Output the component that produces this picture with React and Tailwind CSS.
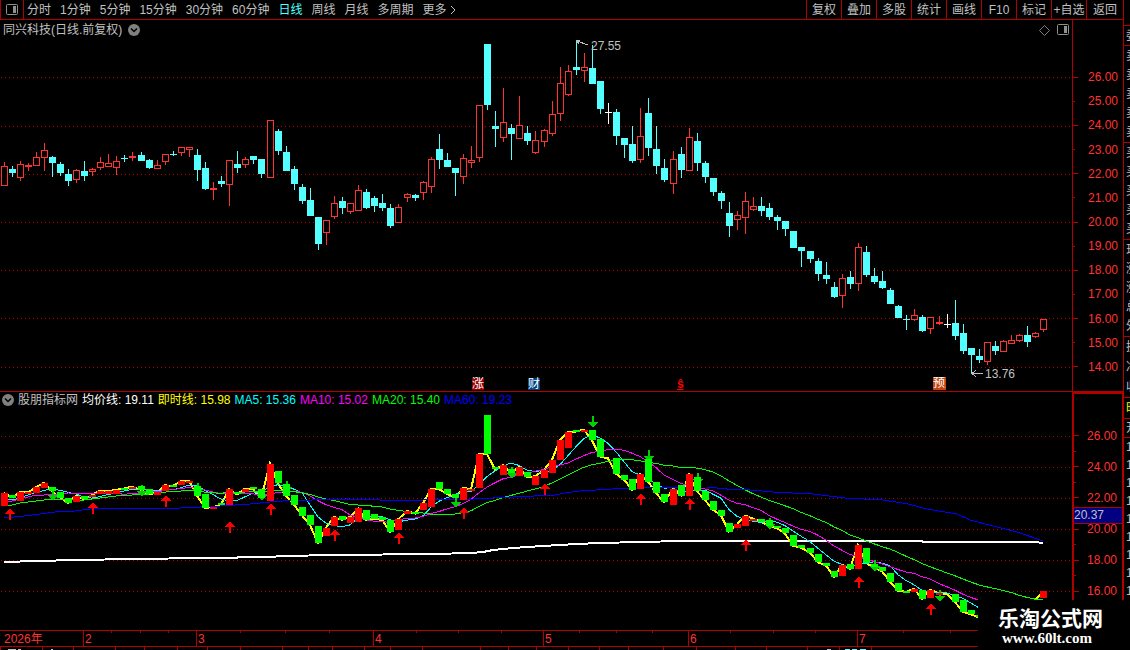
import React from 'react';

const periods = ['分时', '1分钟', '5分钟', '15分钟', '30分钟', '60分钟', '日线', '周线', '月线', '多周期'];
const tools = ['复权', '叠加', '多股', '统计', '画线', 'F10', '标记', '+自选', '返回'];

// high, body top, body bottom, low (chart rows), kind: r = up, c = down, w = flat
const candles = [
    [162, 166, 186, 186, 'r'], [166, 169, 173, 177, 'c'], [161, 164, 178, 181, 'r'], [163, 165, 167, 171, 'r'],
    [152, 157, 166, 166, 'r'], [143, 150, 158, 171, 'r'], [156, 157, 163, 177, 'c'], [162, 164, 173, 176, 'c'],
    [169, 174, 181, 186, 'c'], [169, 170, 180, 183, 'r'], [161, 171, 176, 181, 'c'], [168, 169, 172, 176, 'r'],
    [157, 162, 168, 170, 'r'], [154, 163, 167, 167, 'r'], [156, 161, 168, 175, 'r'], [155, 158, 159, 162, 'c'],
    [152, 156, 158, 161, 'r'], [152, 155, 161, 161, 'c'], [159, 160, 168, 169, 'c'], [160, 165, 169, 169, 'r'],
    [154, 154, 162, 165, 'r'], [151, 154, 155, 156, 'c'], [147, 147, 153, 156, 'r'], [147, 147, 150, 157, 'r'],
    [149, 155, 170, 181, 'c'], [162, 168, 189, 190, 'c'], [182, 188, 190, 200, 'r'], [176, 181, 184, 187, 'c'],
    [160, 160, 185, 206, 'r'], [151, 164, 168, 173, 'c'], [157, 159, 165, 168, 'r'], [156, 156, 160, 164, 'c'],
    [159, 159, 174, 178, 'c'], [120, 120, 178, 178, 'r'], [129, 131, 151, 155, 'c'], [146, 152, 171, 171, 'c'],
    [166, 169, 184, 190, 'c'], [184, 187, 201, 204, 'c'], [188, 200, 216, 216, 'c'], [217, 217, 244, 250, 'c'],
    [220, 220, 233, 245, 'r'], [196, 203, 217, 219, 'r'], [197, 201, 208, 214, 'c'], [203, 203, 212, 214, 'r'],
    [185, 190, 211, 211, 'r'], [189, 192, 208, 209, 'c'], [196, 198, 206, 212, 'c'], [194, 203, 208, 211, 'c'],
    [204, 208, 226, 228, 'c'], [204, 207, 223, 223, 'r'], [193, 194, 198, 202, 'r'], [194, 195, 198, 201, 'c'],
    [181, 182, 193, 200, 'r'], [157, 159, 187, 193, 'r'], [134, 149, 160, 169, 'c'], [153, 160, 167, 167, 'c'],
    [168, 168, 173, 196, 'c'], [154, 158, 177, 184, 'r'], [146, 160, 163, 168, 'r'], [105, 105, 158, 162, 'r'],
    [44, 44, 105, 110, 'c'], [111, 126, 129, 147, 'c'], [88, 122, 138, 142, 'r'], [124, 128, 134, 160, 'c'],
    [96, 125, 139, 139, 'r'], [126, 133, 141, 145, 'c'], [131, 140, 153, 154, 'r'], [129, 130, 142, 147, 'r'],
    [101, 114, 134, 136, 'r'], [67, 83, 114, 121, 'r'], [65, 71, 95, 96, 'r'], [40, 67, 70, 75, 'c'],
    [53, 67, 71, 82, 'r'], [45, 68, 84, 84, 'c'], [81, 81, 109, 114, 'c'], [103, 112, 113, 124, 'w'],
    [109, 112, 136, 145, 'c'], [138, 138, 145, 158, 'c'], [126, 144, 161, 163, 'c'], [108, 136, 160, 163, 'r'],
    [98, 113, 148, 156, 'c'], [126, 149, 166, 174, 'c'], [159, 168, 180, 182, 'c'], [151, 159, 184, 194, 'r'],
    [147, 154, 170, 178, 'c'], [128, 137, 171, 171, 'r'], [133, 141, 163, 171, 'c'], [161, 163, 177, 183, 'c'],
    [178, 178, 192, 196, 'c'], [191, 193, 201, 209, 'c'], [202, 213, 226, 237, 'c'], [211, 215, 220, 230, 'r'],
    [192, 201, 218, 234, 'r'], [197, 206, 210, 211, 'r'], [197, 206, 211, 216, 'c'], [203, 208, 217, 220, 'c'],
    [215, 217, 221, 230, 'c'], [221, 221, 229, 236, 'c'], [231, 231, 248, 248, 'c'], [247, 247, 251, 267, 'c'],
    [251, 251, 259, 263, 'c'], [258, 261, 274, 281, 'c'], [262, 275, 279, 284, 'c'], [282, 287, 297, 298, 'c'],
    [274, 278, 296, 308, 'r'], [271, 277, 284, 289, 'c'], [243, 247, 284, 291, 'r'], [246, 252, 275, 277, 'c'],
    [268, 276, 282, 284, 'c'], [271, 281, 288, 289, 'c'], [288, 290, 304, 304, 'c'], [305, 306, 318, 318, 'c'],
    [315, 319, 320, 330, 'c'], [309, 315, 320, 321, 'r'], [315, 317, 331, 332, 'c'], [317, 317, 329, 334, 'r'],
    [316, 322, 324, 325, 'r'], [314, 324, 325, 328, 'w'], [300, 323, 336, 340, 'c'], [324, 333, 351, 354, 'c'],
    [348, 348, 355, 373, 'c'], [349, 356, 360, 363, 'c'], [342, 342, 362, 365, 'r'], [341, 346, 351, 355, 'c'],
    [340, 341, 352, 352, 'r'], [335, 340, 344, 344, 'r'], [334, 335, 341, 342, 'r'], [326, 335, 342, 347, 'c'],
    [332, 333, 337, 338, 'r'], [319, 319, 330, 332, 'r'],
];

const colors = { r: '#ff3232', c: '#54ffff', w: '#ffffff' };

const barX = (i) => 4 + i * 8 + Math.floor((i + 0.2) / 16.57);
const toSub = (y) => 436 + (y - 77) * 0.6413;

const closes = candles.map(([, top, bottom, , kind]) => toSub(kind === 'c' ? bottom : top));

// moving average, seeded with values for the bars that have no full window
const average = (size, seed) =>
    closes.map((_, i) => {
        if (i < size - 1) return seed[i];
        let sum = 0;
        for (let k = i - size + 1; k <= i; k++) sum += closes[k];
        return sum / size;
    });

const toPoints = (values) => values.map((v, i) => `${barX(i)},${v.toFixed(1)}`).join(' ');

const ma5 = average(5, [498, 500, 498, 495]);
const ma10 = average(10, [503, 501, 499, 497, 495, 495, 494, 494, 493]);
const ma20 = average(20, [506, 505, 503, 502, 501, 500, 499, 499, 499, 500, 500, 499, 498, 497, 496, 495, 495, 494, 494]);

const ma60 = '4,518 24,516 40,514 55,512 75,511 90,509 110,508 180,508 220,506 235,505 250,504 270,502 283,501 312,500 347,499 380,500 423,500 430,499 473,499 493,498 513,497 555,495 565,493 580,491 612,489 640,488 693,487 707,487 727,489 750,490 773,492 813,494 845,498 883,500 908,504 927,509 957,514 970,520 993,526 1017,532 1043,541';
const avgPrice = '4,562 36,561 77,560 133,559 206,558 270,557 283,556 335,555 432,554 472,553 483,552 493,550 513,548 543,546 577,544 600,543 640,542 682,541 922,541 923,542 1035,542 1043,543';

const buys = [[10, 508], [93, 502], [166, 495], [230, 521], [271, 503], [335, 529], [399, 532], [464, 507], [545, 483], [641, 493], [690, 498], [746, 539], [859, 576], [931, 603]];
const sells = [[53, 489], [142, 485], [198, 483], [262, 489], [287, 481], [456, 496], [512, 467], [593, 416], [649, 450], [698, 473], [770, 518], [875, 560], [940, 590]];

const mainScale = ['26.00', '25.00', '24.00', '23.00', '22.00', '21.00', '20.00', '19.00', '18.00', '17.00', '16.00', '15.00', '14.00'];
const subScale = ['26.00', '', '24.00', '', '22.00', '', '20.00', '', '18.00', '', '16.00'];

const months = [
    ['2026年', 'w-[83px] pl-1'],
    ['2', 'w-[113px] border-l pl-px'],
    ['3', 'w-[177px] border-l pl-px'],
    ['4', 'w-[170px] border-l pl-px'],
    ['5', 'w-[145px] border-l pl-px'],
    ['6', 'w-[169px] border-l pl-px'],
    ['7', 'flex-1 border-l pl-px'],
];
const weekTicks = [111, 140, 168, 240, 285, 329, 416, 458, 501, 579, 616, 652, 730, 773, 815, 903, 950];
const tabTicks = [0, 42, 73, 115, 144, 177, 207, 240, 282, 308, 332, 364, 390, 422, 480, 508, 536, 568, 599, 628, 663, 696, 735, 766, 807, 839, 871];

const legend = [
    ['均价线: 19.11', 'text-white'],
    ['即时线: 15.98', 'text-[#ffff00]'],
    ['MA5: 15.36', 'text-[#00ffff]'],
    ['MA10: 15.02', 'text-[#ff00ff]'],
    ['MA20: 15.40', 'text-[#00ff00]'],
    ['MA60: 19.23', 'text-[#0000ff]'],
];

const quoteGroups = [
    ['h-5', ['委']],
    ['h-[97px]', ['卖', '卖', '卖', '卖', '卖']],
    ['h-[97px]', ['买', '买', '买', '买', '买']],
    ['h-[97px]', ['现', '涨', '涨', '总', '外']],
    ['h-[61px]', ['换', '净', '收']],
    ['h-[21px] text-[#ffff00]', ['时']],
    ['h-[19px]', ['开']],
];

const DottedRows = ({ rows }) =>
    rows.map((y) => (
        <line key={y} x1="1" x2="100%" y1={y + 0.5} y2={y + 0.5} stroke="#b00000" strokeDasharray="1 3" />
    ));

const PanelIcon = () => (
    <svg width="13" height="12" viewBox="0 0 13 12" fill="none">
        <rect x="0.5" y="0.5" width="11" height="10" rx="1" stroke="#909090" />
        <rect x="7" y="2" width="3" height="7" fill="#909090" />
    </svg>
);

const DropIcon = () => (
    <svg width="12" height="12" viewBox="0 0 12 12" fill="none">
        <circle cx="6" cy="6" r="6" fill="#808080" />
        <path d="M3 4.5 6 7.5 9 4.5" stroke="#000" strokeWidth="1.5" />
    </svg>
);

const Toolbar = () => (
    <header className="flex h-5 flex-none justify-between border-b border-l border-[#b00000]">
        <div className="flex">
            <button aria-label="侧栏" className="flex w-[23px] items-center justify-center border-r border-[#b00000]">
                <PanelIcon />
            </button>
            <nav className="flex items-center gap-[9px] pl-[3px]">
                {periods.map((name) => (
                    <button key={name} className={name === '日线' ? 'text-[#54ffff]' : ''}>{name}</button>
                ))}
                <button className="flex items-center">
                    更多
                    <svg width="9" height="10" viewBox="0 0 9 10" fill="none" stroke="currentColor">
                        <path d="M4 1 8 5 4 9" />
                    </svg>
                </button>
            </nav>
        </div>
        <div className="flex">
            {tools.map((name) => (
                <button key={name} className="w-[35px] border-l border-[#b00000] text-center last:w-[37px]">{name}</button>
            ))}
        </div>
    </header>
);

const Scale = ({ labels, className }) => (
    <div className={`flex flex-col text-[#ff3232] ${className}`}>
        {labels.map((label, i) => (
            <div key={i} className="flex flex-1 items-center justify-between pr-[5px]">
                <span className={i % 2 ? 'h-px w-[2px] bg-[#b00000]' : 'h-px w-[5px] bg-[#b00000]'} />
                <span className="leading-none">{label}</span>
            </div>
        ))}
    </div>
);

const MainChart = () => (
    <svg className="h-full w-full" shapeRendering="crispEdges">
        <g transform="translate(0 -40)">
            <DottedRows rows={[77, 126, 174, 222, 270, 318, 367]} />
            {candles.map(([high, top, bottom, low, kind], i) => {
                const x = barX(i);
                const hollow = kind === 'r' && bottom - top > 2;
                return (
                    <g key={i} fill={colors[kind]}>
                        <rect x={x} y={high} width="1" height={low - high} />
                        <rect x={x - 3} y={top} width="7" height={bottom - top} />
                        {hollow && <rect x={x - 2} y={top + 1} width="5" height={bottom - top - 2} fill="#000" />}
                    </g>
                );
            })}
            <g stroke="#c0c0c0" fill="none">
                <path d="M577 41 588 45M576 40H580M577 41 579 44" />
                <path d="M972 373.500H983M976 370 972 373.500 976 377" />
            </g>
            <g fill="#c0c0c0">
                <text x="591" y="50">27.55</text>
                <text x="985" y="378">13.76</text>
            </g>
        </g>
    </svg>
);

const SubChart = () => (
    <svg className="absolute inset-0 h-full w-full" shapeRendering="crispEdges">
        <g transform="translate(0 -408)" fill="none">
            <DottedRows rows={[436, 467, 498, 529, 560, 591]} />
            <polyline points={avgPrice} stroke="#fff" strokeWidth="2" />
            <polyline points={toPoints(closes)} stroke="#ffff00" strokeWidth="2" />
            <polyline points={toPoints(ma5)} stroke="#00ffff" />
            <polyline points={toPoints(ma10)} stroke="#ff00ff" />
            <polyline points={toPoints(ma20)} stroke="#00ff00" />
            <polyline points={ma60} stroke="#0000ff" />
            {sells.map(([x, y]) => (
                <path key={x} d={`M${x - 1} ${y}h2v6h4l-5 6-5-6h4z`} fill="#00d000" />
            ))}
            {candles.map(([, top, bottom, , kind], i) =>
                kind === 'w' ? null : (
                    <rect
                        key={i}
                        x={barX(i) - 3}
                        y={Math.round(toSub(top))}
                        width="7"
                        height={Math.max(2, Math.round(toSub(bottom)) - Math.round(toSub(top)))}
                        fill={kind === 'r' ? '#ff0000' : '#00ff00'}
                    />
                )
            )}
            {buys.map(([x, y]) => (
                <path key={x} d={`M${x} ${y}l5 6h-4v6h-2v-6h-4z`} fill="#ff0000" />
            ))}
        </g>
    </svg>
);

const TimeAxis = () => (
    <div className="relative flex-none">
        <div className="flex h-[17px] border-y border-[#b00000] leading-4 text-[#ff3232]">
            {months.map(([name, cell]) => (
                <div key={name} className={`border-[#b00000] ${cell}`}>{name}</div>
            ))}
        </div>
        <div className="h-[3px]" />
        <svg className="absolute inset-0 h-full w-full" fill="#b00000" shapeRendering="crispEdges">
            {weekTicks.map((x) => <rect key={x} x={x} y="1" width="1" height="2" />)}
            {tabTicks.map((x) => <rect key={x} x={x} y="17" width="1" height="3" />)}
            <path d="M8 19.500h8m2 0h3m30 0h2m774 0h4" stroke="#c0c0c0" />
            <path d="M845 19.500h5m2 0h5m3 0h6" stroke="#54ffff" />
        </svg>
    </div>
);

const QuoteStrip = () => (
    <aside className="flex w-[6px] flex-none flex-col overflow-hidden pt-[25px]">
        {quoteGroups.map(([size, rows], i) => (
            <div key={i} className={`flex flex-none flex-col justify-around border-t border-[#b00000] pl-[2px] leading-4 ${size}`}>
                {rows.map((text, k) => <span key={k} className="w-3 flex-none">{text}</span>)}
            </div>
        ))}
        <div className="flex flex-col border-t border-[#b00000] pl-[2px] leading-[18px]">
            {[...Array(9)].map((_, k) => <span key={k} className="w-7 flex-none">15:00</span>)}
        </div>
    </aside>
);

const App = () => (
    <div className="relative flex h-screen overflow-hidden bg-black font-['Liberation_Sans','Noto_Sans_CJK_SC',sans-serif] text-[12px] leading-4 whitespace-nowrap text-[#c0c0c0]">
        <main className="flex min-w-0 flex-1 flex-col border-r border-[#b00000]">
            <Toolbar />

            {/* Daily candles */}
            <section className="flex h-[372px] flex-none border-b border-[#b00000]">
                <div className="flex min-w-0 flex-1 flex-col">
                    <div className="flex h-5 flex-none items-center justify-between pr-[2px] pl-[3px]">
                        <h1 className="flex items-center gap-[6px]">
                            同兴科技(日线.前复权)
                            <button aria-label="展开"><DropIcon /></button>
                        </h1>
                        <div className="flex items-center gap-[7px]">
                            <svg width="11" height="11" viewBox="0 0 11 11" fill="none" stroke="#808080">
                                <path d="M5.500 0.500 10.500 5.500 5.500 10.500 0.500 5.500z" />
                            </svg>
                            <PanelIcon />
                        </div>
                    </div>
                    <div className="relative min-h-0 flex-1">
                        <MainChart />
                        <span className="absolute bottom-px left-[472px] size-3 bg-[#900000] leading-3 text-white">涨</span>
                        <span className="absolute bottom-px left-[528px] size-3 bg-[#004080] leading-3 text-white">财</span>
                        <span className="absolute bottom-px left-[677px] leading-3 font-bold text-[#ff0000] underline">ŝ</span>
                        <span className="absolute bottom-px left-[933px] size-[13px] bg-[#c04810] leading-3 text-white">预</span>
                    </div>
                </div>
                <div className="w-[51px] flex-none border-l border-[#b00000] pt-[45px]">
                    <Scale labels={mainScale} className="h-[314px]" />
                </div>
            </section>

            {/* Indicator */}
            <section className="flex min-h-0 flex-1">
                <div className="flex min-w-0 flex-1 flex-col">
                    <div className="flex h-4 flex-none items-center gap-1 pl-[2px]">
                        <button aria-label="指标"><DropIcon /></button>
                        <span>股朋指标网</span>
                        {legend.map(([text, color]) => <span key={text} className={color}>{text}</span>)}
                    </div>
                    <div className="relative min-h-0 flex-1">
                        <SubChart />
                    </div>
                </div>
                <div className="relative w-[51px] flex-none border-t-2 border-r border-l-2 border-[#b00000] pt-[34px]">
                    <Scale labels={subScale} className="h-[171px]" />
                    <div className="absolute top-[113px] right-0 left-0 h-[17px] border-y border-[#b00000] bg-[#000080] leading-[15px]">20.37</div>
                </div>
            </section>

            <TimeAxis />
        </main>

        <QuoteStrip />

        <div className="absolute right-0 bottom-0 h-[50px] w-[152px] bg-black pt-2 pl-5 font-bold text-white">
            <div className="text-[21px] leading-[22px]">乐淘公式网</div>
            <div className="pl-1 font-['Liberation_Serif',serif] text-[15px] leading-[17px]">www.60lt.com</div>
        </div>
    </div>
);

export default App;
